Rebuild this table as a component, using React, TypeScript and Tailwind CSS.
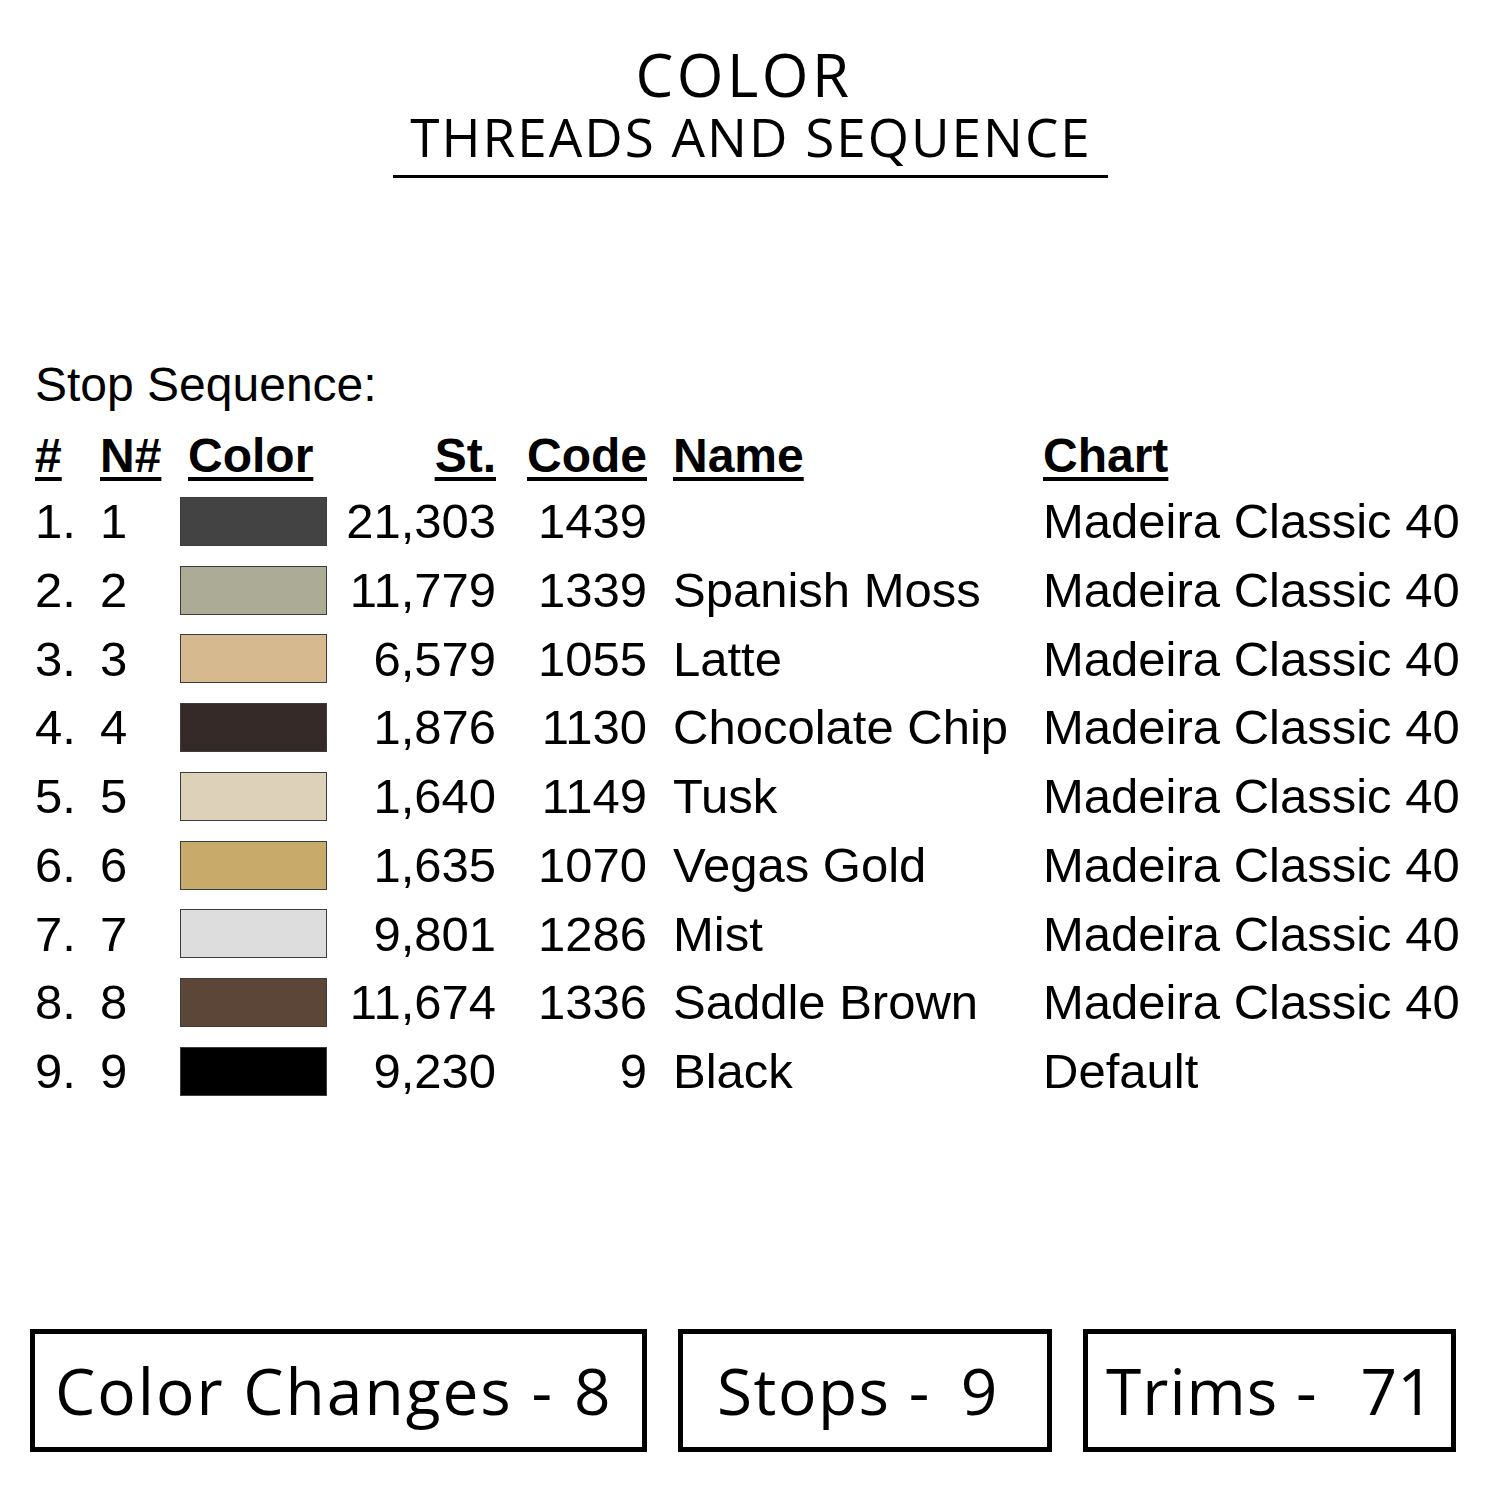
// Thread colour / stop sequence sheet

const ROWS = [
  { n: 1, st: "21,303", code: "1439", name: "", chart: "Madeira Classic 40", swatch: "bg-[#434343]" },
  { n: 2, st: "11,779", code: "1339", name: "Spanish Moss", chart: "Madeira Classic 40", swatch: "bg-[#abab96]" },
  { n: 3, st: "6,579", code: "1055", name: "Latte", chart: "Madeira Classic 40", swatch: "bg-[#d6b98e]" },
  { n: 4, st: "1,876", code: "1130", name: "Chocolate Chip", chart: "Madeira Classic 40", swatch: "bg-[#352a27]" },
  { n: 5, st: "1,640", code: "1149", name: "Tusk", chart: "Madeira Classic 40", swatch: "bg-[#ded1b9]" },
  { n: 6, st: "1,635", code: "1070", name: "Vegas Gold", chart: "Madeira Classic 40", swatch: "bg-[#c8aa6a]" },
  { n: 7, st: "9,801", code: "1286", name: "Mist", chart: "Madeira Classic 40", swatch: "bg-[#dcdddc]" },
  { n: 8, st: "11,674", code: "1336", name: "Saddle Brown", chart: "Madeira Classic 40", swatch: "bg-[#5b4637]" },
  { n: 9, st: "9,230", code: "9", name: "Black", chart: "Default", swatch: "bg-black" },
];

const COLS = "grid grid-cols-[65px_80px_150px_166px_151px_396px_1fr]";
const HEAD = "underline decoration-4 underline-offset-[5px]";
const BOX = "h-[123px] border-[5px] border-black flex items-center";

export default function App() {
  return (
    <div className="w-[1500px] h-[1500px] bg-white text-black flex flex-col overflow-hidden">
      {/* ─── Title ───────────────────────────── */}
      <header className="pt-[42px] flex flex-col items-center font-['Open_Sans',sans-serif]">
        <div className="text-[60px] leading-[64px] font-medium tracking-[3.5px] pr-[12px]">COLOR</div>
        <div className="mt-[3px] text-[53px] leading-[56px] tracking-[2px] pl-[2px]">
          THREADS AND SEQUENCE
        </div>
        <div className="mt-[10px] w-[715px] h-[3px] bg-black" />
      </header>

      {/* ─── Stop sequence table ─────────────── */}
      <section className="mt-[183px] pl-[35px] font-['Liberation_Sans',Arial,sans-serif]">
        <div className="text-[48px] leading-[48px]">Stop Sequence:</div>

        <div className={`${COLS} mt-[19px] h-[56px] text-[48px] leading-[56px] font-bold`}>
          <span><span className={HEAD}>#</span></span>
          <span><span className={HEAD}>N#</span></span>
          <span className="pl-2"><span className={HEAD}>Color</span></span>
          <span className="text-right"><span className={HEAD}>St.</span></span>
          <span className="text-right"><span className={HEAD}>Code</span></span>
          <span className="pl-[26px]"><span className={HEAD}>Name</span></span>
          <span><span className={HEAD}>Chart</span></span>
        </div>

        <div className="mt-[3px]">
          {ROWS.map((r) => (
            <div key={r.n} className={`${COLS} items-center h-[68.75px] text-[49px] leading-[68.75px]`}>
              <span>{r.n}.</span>
              <span>{r.n}</span>
              <span className="flex items-center">
                <span className={`block w-[147px] h-[49px] border-[1.5px] border-[#3c3c3c] ${r.swatch}`} />
              </span>
              <span className="text-right">{r.st}</span>
              <span className="text-right">{r.code}</span>
              <span className="pl-[26px] whitespace-nowrap">{r.name}</span>
              <span className="whitespace-nowrap">{r.chart}</span>
            </div>
          ))}
        </div>
      </section>

      {/* ─── Summary boxes ───────────────────── */}
      <footer className="mt-auto mb-[48px] pl-[30px] flex gap-[31px] font-['Open_Sans',sans-serif] text-[64px] leading-none">
        <div className={`${BOX} w-[617px] pl-[20px]`}>
          <span className="tracking-[2px]">Color Changes -</span>
          <span className="ml-[20px]">8</span>
        </div>
        <div className={`${BOX} w-[374px] pl-[34px]`}>
          <span className="tracking-[1.5px]">Stops -</span>
          <span className="ml-[30px]">9</span>
        </div>
        <div className={`${BOX} w-[373px] pl-[18px]`}>
          <span className="tracking-[1px]">Trims -</span>
          <span className="ml-[43px]">71</span>
        </div>
      </footer>
    </div>
  );
}
